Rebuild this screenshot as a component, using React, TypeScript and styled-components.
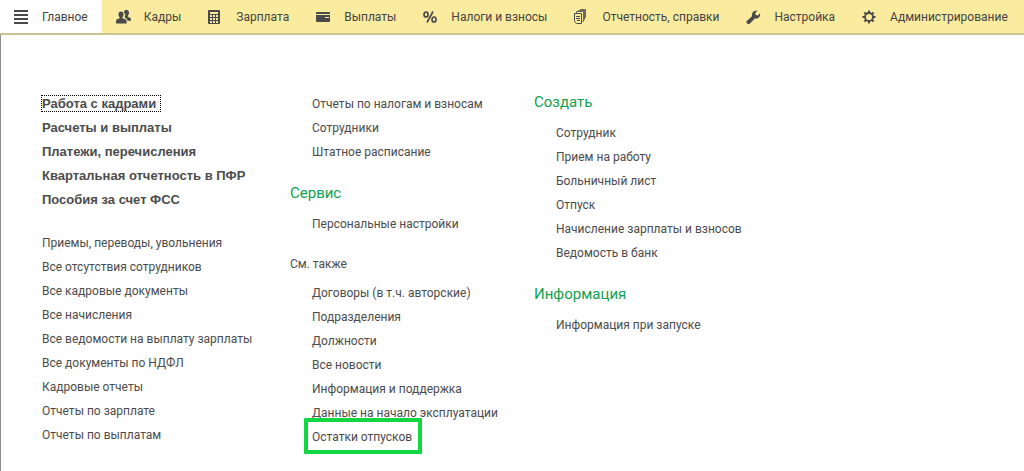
import React from "react";
import styled, { createGlobalStyle } from "styled-components";

const Global = createGlobalStyle`
  * { box-sizing: border-box; }
  body {
    margin: 0;
    background: #fefefe;
    color: #4c4c4c;
    font-family: Roboto, "Liberation Sans", Arial, sans-serif;
    font-size: 12px;
  }
  a { color: inherit; text-decoration: none; }
`;

const NavBar = styled.nav`
  display: flex;
  height: 35px;
  background: #fbeb9e;
  border-bottom: 2px solid #cdc391;
  overflow: hidden;
`;

const NavItem = styled.a<{ $active?: boolean }>`
  display: flex;
  align-items: center;
  gap: 13px;
  padding: 1px ${(p) => (p.$active ? "14px" : "13px")} 0 14px;
  white-space: nowrap;
  color: #444;
  background: ${(p) => (p.$active ? "#fefefe" : "transparent")};
`;

const Icon = styled.svg`
  flex: none;
  width: 15px;
  height: 16px;
  color: #4a4a4c;
`;

const Content = styled.main`
  display: grid;
  grid-template-columns: 248px 244px 1fr;
  min-height: calc(100vh - 35px);
  padding: 57px 24px 10px 41px;
  border-left: 1px solid #8c8c8c;
`;

const Column = styled.div`
  display: flex;
  flex-direction: column;
  gap: 19px;
`;

const Heading = styled.h2`
  margin: 0 0 9px;
  font-size: 15px;
  font-weight: 400;
  line-height: 20px;
  color: #12a150;
`;

const SubHeading = styled.h3`
  margin: 0 0 8px;
  font-size: 12px;
  font-weight: 400;
  line-height: 18px;
`;

const List = styled.ul<{ $bold?: boolean; $indent?: boolean }>`
  list-style: none;
  margin: 0;
  padding: 0 0 0 ${(p) => (p.$indent ? "22px" : "0")};
  line-height: 24px;
  white-space: nowrap;
  ${(p) => p.$bold && `font: 700 13px/24px "Liberation Sans", Arial, sans-serif;`}
`;

const Row = styled.li`
  height: 24px;
`;

const Link = styled.a<{ $focused?: boolean }>`
  position: relative;
  ${(p) => p.$focused && "padding-right: 4px; outline: 1px dotted #000;"}
`;

const Marker = styled.span`
  position: absolute;
  inset: -12px -10px -10px -8px;
  border: 4px solid #12d642;
  border-radius: 1px;
  pointer-events: none;
`;

const icons = {
  menu: <path d="M0 2h14M0 6h14M0 10h14M0 14h14" stroke="currentColor" strokeWidth="2" />,
  people: (
    <g fill="currentColor">
      <path d="M8 4C7.900 1.800 8.800 .8 10.300 .8s2.700 1 2.700 3c0 1.400-.6 2.400-1.200 3v1l2.200 1c.8.400 1 1 1 3h-3.500c-.2-1.500-1-2.400-2.700-3V7.500c.5-.7.600-1.600.4-2.500 0-.5-.4-.7-1.200-1z" />
      <path d="M2.500 5.300c0-1.900 1-2.800 2.500-2.800s2.600.9 2.600 2.800c0 1.500-.5 2.400-1.200 3v1l3 1c1 .5 1.300 1.200 1.300 4.200H0c0-3 .2-3.700 1-4.200l2.600-1v-1c-.7-.7-1.100-1.600-1.100-3z" />
    </g>
  ),
  calc: (
    <g>
      <rect x="0" y="1" width="12" height="14" rx="1" fill="currentColor" />
      <path d="M2 3h8v2H2zM2 6h2v2H2zM5 6h2v2H5zM8 6h2v2H8zM2 9h2v2H2zM5 9h2v2H5zM8 9h2v2H8zM2 12h2v2H2zM5 12h2v2H5zM8 12h2v2H8z" fill="#fbeb9e" />
    </g>
  ),
  card: (
    <g>
      <rect x="0" y="3" width="14" height="10" rx="1" fill="currentColor" />
      <path d="M0 5h14v1H0zM9 8h4v1H9z" fill="#fbeb9e" />
    </g>
  ),
  percent: (
    <g fill="none" stroke="currentColor">
      <ellipse cx="3" cy="5.500" rx="2" ry="2.500" strokeWidth="1.700" />
      <ellipse cx="11" cy="10.500" rx="2" ry="2.500" strokeWidth="1.700" />
      <path d="M10 2.500L4 13.500" strokeWidth="1.600" />
    </g>
  ),
  docs: (
    <g fill="none" stroke="currentColor">
      <path d="M2.500 4.500v-2h7v10h-1M4.500 2.500v-1h6v9h-1M6.500 1V.5h5v8h-1" opacity=".8" />
      <path d="M.5 4.500h7v10h-5l-2-2zM2 7.500h4M2 9.500h4M3 11.500h3" />
    </g>
  ),
  wrench: (
    <path d="M.8 12L6 7.200C5.400 4 7.600 1 11.500 1.500L9.300 4l.4 2 2.100.4L14 4.200c.8 3.500-2 5.900-5.200 5.200L4 14.500c-.8.800-2 .700-2.800 0-.8-.7-1.200-1.700-.4-2.500z" fill="currentColor" />
  ),
  gear: (
    <g fill="none" stroke="currentColor">
      <circle cx="7" cy="8" r="4" strokeWidth="1.800" />
      <path d="M7 1.500v2.500M7 12v2.500M.5 8H3M11 8h2.500M2.400 3.400l1.800 1.800M9.800 10.800l1.800 1.800M2.400 12.600l1.800-1.800M9.800 5.200l1.800-1.800" strokeWidth="2" />
    </g>
  ),
};

const sections: { icon: keyof typeof icons; label: string }[] = [
  { icon: "menu", label: "Главное" },
  { icon: "people", label: "Кадры" },
  { icon: "calc", label: "Зарплата" },
  { icon: "card", label: "Выплаты" },
  { icon: "percent", label: "Налоги и взносы" },
  { icon: "docs", label: "Отчетность, справки" },
  { icon: "wrench", label: "Настройка" },
  { icon: "gear", label: "Администрирование" },
];

interface LinksProps {
  items: string[];
  bold?: boolean;
  indent?: boolean;
  focused?: string;
  marked?: string;
}

function Links({ items, bold, indent, focused, marked }: LinksProps) {
  return (
    <List $bold={bold} $indent={indent}>
      {items.map((item) => (
        <Row key={item}>
          <Link href="#" $focused={item === focused}>
            {item}
            {item === marked && <Marker />}
          </Link>
        </Row>
      ))}
    </List>
  );
}

export default function App() {
  return (
    <>
      <Global />
      <NavBar>
        {sections.map((s, i) => (
          <NavItem key={s.label} href="#" $active={i === 0}>
            <Icon viewBox="0 0 15 16" aria-hidden="true">{icons[s.icon]}</Icon>
            {s.label}
          </NavItem>
        ))}
      </NavBar>
      <Content>
        <Column>
          <Links
            bold
            focused="Работа с кадрами"
            items={[
              "Работа с кадрами",
              "Расчеты и выплаты",
              "Платежи, перечисления",
              "Квартальная отчетность в ПФР",
              "Пособия за счет ФСС",
            ]}
          />
          <Links
            items={[
              "Приемы, переводы, увольнения",
              "Все отсутствия сотрудников",
              "Все кадровые документы",
              "Все начисления",
              "Все ведомости на выплату зарплаты",
              "Все документы по НДФЛ",
              "Кадровые отчеты",
              "Отчеты по зарплате",
              "Отчеты по выплатам",
            ]}
          />
        </Column>
        <Column>
          <Links indent items={["Отчеты по налогам и взносам", "Сотрудники", "Штатное расписание"]} />
          <section>
            <Heading>Сервис</Heading>
            <Links indent items={["Персональные настройки"]} />
          </section>
          <section>
            <SubHeading>См. также</SubHeading>
            <Links
              indent
              marked="Остатки отпусков"
              items={[
                "Договоры (в т.ч. авторские)",
                "Подразделения",
                "Должности",
                "Все новости",
                "Информация и поддержка",
                "Данные на начало эксплуатации",
                "Остатки отпусков",
              ]}
            />
          </section>
        </Column>
        <Column>
          <section>
            <Heading>Создать</Heading>
            <Links
              indent
              items={[
                "Сотрудник",
                "Прием на работу",
                "Больничный лист",
                "Отпуск",
                "Начисление зарплаты и взносов",
                "Ведомость в банк",
              ]}
            />
          </section>
          <section>
            <Heading>Информация</Heading>
            <Links indent items={["Информация при запуске"]} />
          </section>
        </Column>
      </Content>
    </>
  );
}
